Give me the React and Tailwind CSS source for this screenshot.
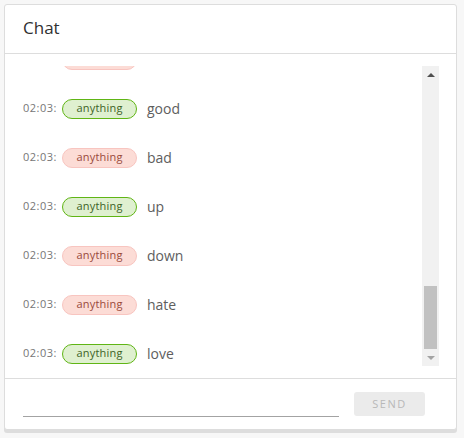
const messages = [
  { tag: 'bad', text: 'hello' },
  { tag: 'good', text: 'good' },
  { tag: 'bad', text: 'bad' },
  { tag: 'good', text: 'up' },
  { tag: 'bad', text: 'down' },
  { tag: 'bad', text: 'hate' },
  { tag: 'good', text: 'love' },
];

const Label = ({ tone }) => (
  <span
    className={
      tone === 'good'
        ? 'inline-flex h-5 w-[75px] items-center justify-center rounded-full border border-[#60b515] bg-[#dff0d0] text-[11px] tracking-[0.2px] text-[#3d6327]'
        : 'inline-flex h-5 w-[75px] items-center justify-center rounded-full border border-[#f8c5c0] bg-[#fcdcd6] text-[11px] tracking-[0.2px] text-[#9a4a3c]'
    }
  >
    anything
  </span>
);

const Scrollbar = () => (
  <div className="flex w-[17px] flex-col items-center bg-[#f1f1f1]">
    {/* up arrow */}
    <div className="flex h-[17px] w-full items-center justify-center">
      <svg width="8" height="4" viewBox="0 0 8 4">
        <path d="M0 4 L4 0 L8 4 Z" fill="#505050" />
      </svg>
    </div>
    <div className="flex w-full flex-1 flex-col px-[2px]">
      <div className="flex-1" />
      <div className="h-[63px] w-full bg-[#c1c1c1]" />
    </div>
    {/* down arrow */}
    <div className="flex h-[17px] w-full items-center justify-center">
      <svg width="8" height="4" viewBox="0 0 8 4">
        <path d="M0 0 L8 0 L4 4 Z" fill="#a3a3a3" />
      </svg>
    </div>
  </div>
);

export default function App() {
  return (
    <div className="min-h-[438px] bg-[#f7f7f7] p-1 font-['Open_Sans',sans-serif]">
      <div className="flex w-[453px] flex-col rounded-[3px] border border-[#dddddd] bg-white shadow-[0_3px_0_#dddddd]">
        {/* Header */}
        <div className="flex h-[49px] items-center border-b border-[#dddddd] px-[18px] pb-[2px]">
          <h2 className="text-[17px] font-normal text-[#313131]">Chat</h2>
        </div>

        {/* Messages */}
        <div className="flex border-b border-[#dddddd] py-3 pl-[18px] pr-[17px]">
          <div className="h-[300px] flex-1 overflow-hidden">
            <div className="-mt-[31px]">
              {messages.map((m, i) => (
                <div key={i} className="flex h-[49px] items-center">
                  <span className="w-[39px] text-[11px] tracking-[0.5px] text-[#767676]">02:03:</span>
                  <Label tone={m.tag} />
                  <span className="ml-[10px] text-[14px] text-[#5e5e5e]">{m.text}</span>
                </div>
              ))}
            </div>
          </div>
          <Scrollbar />
        </div>

        {/* Input */}
        <div className="flex h-[50px] items-end gap-[15px] pb-[12px] pl-[18px] pr-[31px]">
          <input
            type="text"
            className="h-6 flex-1 border-b border-[#a3a3a3] bg-transparent text-[14px] outline-none"
          />
          <button className="mb-[1px] h-6 w-[71px] rounded-[3px] bg-[#ebebeb] text-[11px] tracking-[1.5px] text-[#b8b8b8]">
            SEND
          </button>
        </div>
      </div>
    </div>
  );
}
